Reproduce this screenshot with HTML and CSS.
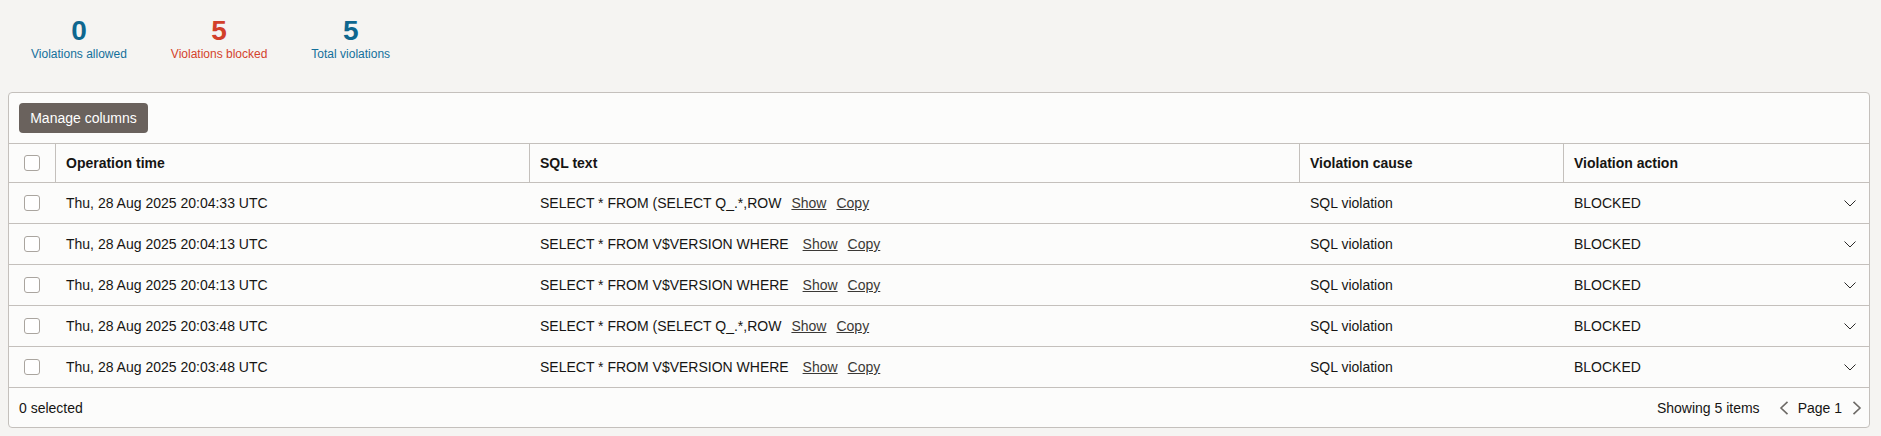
FILE: index.html
```html
<!DOCTYPE html>
<html lang="en">
<head>
<meta charset="utf-8">
<title>Violations</title>
<link rel="stylesheet" href="styles.css">
</head>
<body>
<div class="stats">
  <div class="stat stat-blue"><div class="stat-num">0</div><div class="stat-label">Violations allowed</div></div>
  <div class="stat stat-red"><div class="stat-num">5</div><div class="stat-label">Violations blocked</div></div>
  <div class="stat stat-blue"><div class="stat-num">5</div><div class="stat-label">Total violations</div></div>
</div>
<div class="card">
  <div class="toolbar"><button class="btn">Manage columns</button></div>
  <div class="grid">
    <div class="row head">
      <div class="cell cb-cell"><span class="cb"></span></div>
      <div class="cell">Operation time</div>
      <div class="cell">SQL text</div>
      <div class="cell">Violation cause</div>
      <div class="cell">Violation action</div>
    </div>
    <div class="row">
      <div class="cell cb-cell"><span class="cb"></span></div>
      <div class="cell">Thu, 28 Aug 2025 20:04:33 UTC</div>
      <div class="cell"><span class="sql">SELECT * FROM (SELECT Q_.*,ROW</span><a class="lnk">Show</a><a class="lnk">Copy</a></div>
      <div class="cell">SQL violation</div>
      <div class="cell action">BLOCKED<svg class="chev" width="12" height="7" viewBox="0 0 12 7"><polyline points="0.5,0.5 6,6 11.5,0.5" fill="none" stroke="#2b2a28" stroke-width="1"/></svg></div>
    </div>
    <div class="row">
      <div class="cell cb-cell"><span class="cb"></span></div>
      <div class="cell">Thu, 28 Aug 2025 20:04:13 UTC</div>
      <div class="cell"><span class="sql">SELECT * FROM V$VERSION WHERE </span><a class="lnk">Show</a><a class="lnk">Copy</a></div>
      <div class="cell">SQL violation</div>
      <div class="cell action">BLOCKED<svg class="chev" width="12" height="7" viewBox="0 0 12 7"><polyline points="0.5,0.5 6,6 11.5,0.5" fill="none" stroke="#2b2a28" stroke-width="1"/></svg></div>
    </div>
    <div class="row">
      <div class="cell cb-cell"><span class="cb"></span></div>
      <div class="cell">Thu, 28 Aug 2025 20:04:13 UTC</div>
      <div class="cell"><span class="sql">SELECT * FROM V$VERSION WHERE </span><a class="lnk">Show</a><a class="lnk">Copy</a></div>
      <div class="cell">SQL violation</div>
      <div class="cell action">BLOCKED<svg class="chev" width="12" height="7" viewBox="0 0 12 7"><polyline points="0.5,0.5 6,6 11.5,0.5" fill="none" stroke="#2b2a28" stroke-width="1"/></svg></div>
    </div>
    <div class="row">
      <div class="cell cb-cell"><span class="cb"></span></div>
      <div class="cell">Thu, 28 Aug 2025 20:03:48 UTC</div>
      <div class="cell"><span class="sql">SELECT * FROM (SELECT Q_.*,ROW</span><a class="lnk">Show</a><a class="lnk">Copy</a></div>
      <div class="cell">SQL violation</div>
      <div class="cell action">BLOCKED<svg class="chev" width="12" height="7" viewBox="0 0 12 7"><polyline points="0.5,0.5 6,6 11.5,0.5" fill="none" stroke="#2b2a28" stroke-width="1"/></svg></div>
    </div>
    <div class="row">
      <div class="cell cb-cell"><span class="cb"></span></div>
      <div class="cell">Thu, 28 Aug 2025 20:03:48 UTC</div>
      <div class="cell"><span class="sql">SELECT * FROM V$VERSION WHERE </span><a class="lnk">Show</a><a class="lnk">Copy</a></div>
      <div class="cell">SQL violation</div>
      <div class="cell action">BLOCKED<svg class="chev" width="12" height="7" viewBox="0 0 12 7"><polyline points="0.5,0.5 6,6 11.5,0.5" fill="none" stroke="#2b2a28" stroke-width="1"/></svg></div>
    </div>
  </div>
  <div class="footer">
    <span>0 selected</span>
    <div class="pager">
      <span class="showing">Showing 5 items</span>
      <svg class="pchev" width="10" height="14" viewBox="0 0 10 14"><polyline points="8.5,0.8 2,7 8.5,13.2" fill="none" stroke="#6d6a66" stroke-width="1.6"/></svg>
      <span class="page">Page 1</span>
      <svg class="pchev" width="10" height="14" viewBox="0 0 10 14"><polyline points="1.5,0.8 8,7 1.5,13.2" fill="none" stroke="#6d6a66" stroke-width="1.6"/></svg>
    </div>
  </div>
</div>
</body>
</html>
```

FILE: styles.css
```css
* { box-sizing: border-box; }
html, body { margin: 0; }
body {
  background: #f5f4f2;
  font-family: "Liberation Sans", Arial, sans-serif;
  color: #161513;
  padding: 0 11px 8px 8px;
}
.stats {
  display: flex;
  gap: 44px;
  padding: 15px 0 0 23px;
  height: 92px;
}
.stat {
  display: flex;
  flex-direction: column;
  align-items: center;
}
.stat-num {
  font-size: 28px;
  font-weight: bold;
  line-height: 32px;
}
.stat-label {
  font-size: 12px;
  line-height: 14px;
}
.stat-blue .stat-num { color: #0e678f; }
.stat-blue .stat-label { color: #14709b; }
.stat-red .stat-num { color: #d2402a; }
.stat-red .stat-label { color: #d4432d; }

.card {
  background: #fcfcfb;
  border: 1px solid #c4c0bc;
  border-radius: 4px;
  height: 336px;
  display: flex;
  flex-direction: column;
}
.toolbar {
  padding: 10px;
  border-bottom: 1px solid #c4c0bc;
  height: 51px;
}
.btn {
  height: 30px;
  width: 129px;
  padding: 0;
  border: none;
  border-radius: 4px;
  background: #6a625d;
  color: #ffffff;
  font-family: inherit;
  font-size: 14px;
}
.row {
  display: grid;
  grid-template-columns: 46px 474px 770px 264px 1fr;
  height: 41px;
  border-bottom: 1px solid #c4c0bc;
  font-size: 14px;
}
.row.head {
  height: 39px;
  font-weight: bold;
}
.cell {
  display: flex;
  align-items: center;
  padding-left: 11px;
  white-space: nowrap;
}
.head .cell + .cell {
  border-left: 1px solid #c4c0bc;
  padding-left: 10px;
}
.cb-cell {
  justify-content: center;
  padding-left: 0;
}
.cb {
  width: 16px;
  height: 16px;
  border: 1px solid #aaa59f;
  border-radius: 3px;
  background: #ffffff;
}
.sql { white-space: pre; }
.lnk {
  margin-left: 10px;
  color: #3b3936;
  text-decoration: underline;
}
.action {
  justify-content: space-between;
  padding-right: 13px;
}
.chev { display: block; }
.footer {
  flex: 1;
  display: flex;
  align-items: center;
  justify-content: space-between;
  padding: 0 7px 0 10px;
  font-size: 14px;
}
.pager {
  display: flex;
  align-items: center;
}
.showing { margin-right: 19px; }
.page { margin: 0 10px 0 9px; }
.pchev { display: block; }
```
